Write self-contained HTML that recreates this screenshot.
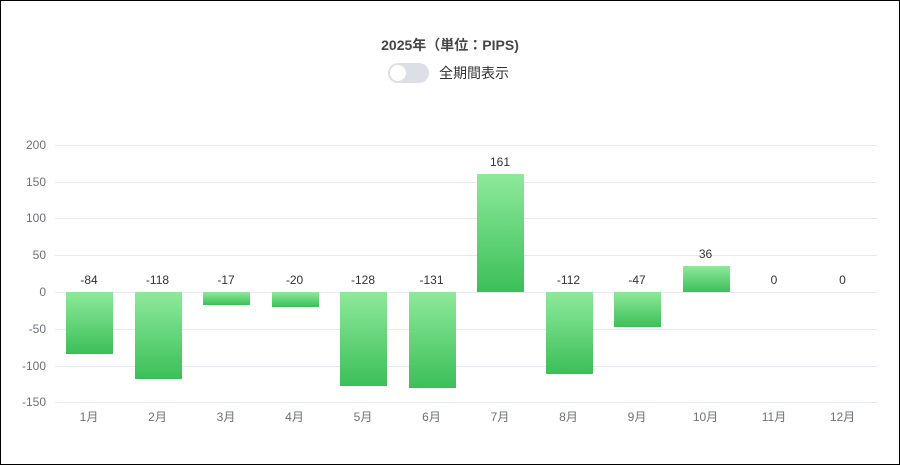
<!DOCTYPE html>
<html><head><meta charset="utf-8"><style>
html,body{margin:0;padding:0}
body{width:900px;height:465px;position:relative;background:#fff;font-family:"Liberation Sans","Noto Sans CJK JP",sans-serif;overflow:hidden}
.frame{position:absolute;left:0;top:0;width:898px;height:463px;border:1px solid #000}
.t{position:absolute;white-space:nowrap}
.g{position:absolute;left:55px;width:822px;height:1px;background:#e6e9f0}
.y{position:absolute;width:44px;left:2px;text-align:right;font-size:12px;color:#6e7079}
.b{position:absolute;width:47px;background:linear-gradient(#8ee99b,#3cbf58)}
.v{position:absolute;width:68px;text-align:center;font-size:12px;color:#333}
.m{position:absolute;width:68px;text-align:center;font-size:12px;color:#6e7079;top:408px}
</style></head><body>
<div class="frame"></div>
<div class="t" style="left:0;width:900px;text-align:center;top:35px;font-size:14px;font-weight:bold;color:#464646">2025年（単位：PIPS)</div>
<div style="position:absolute;left:388px;top:63px;width:41px;height:20px;border-radius:10px;background:#dcdfe6"></div>
<div style="position:absolute;left:390px;top:65px;width:16px;height:16px;border-radius:8px;background:#fff"></div>
<div class="t" style="left:439px;top:63px;font-size:14px;color:#333">全期間表示</div>
<div id="c"></div>
<script>
var c=document.getElementById('c'),h='';
var ys=[200,150,100,50,0,-50,-100,-150];
ys.forEach(function(v){var y=292-v*0.736;h+='<div class="g" style="top:'+Math.round(y)+'px"></div><div class="y" style="top:'+Math.round(y-7)+'px">'+v+'</div>';});
var d=[-84,-118,-17,-20,-128,-131,161,-112,-47,36,0,0];
d.forEach(function(v,i){var x=55+68.5*i;var bx=x+11;
if(v>0){var t=292-v*0.736;h+='<div class="b" style="left:'+bx+'px;top:'+t+'px;height:'+(v*0.736)+'px"></div><div class="v" style="left:'+x+'px;top:'+(t-19)+'px">'+v+'</div>';}
else{ if(v<0)h+='<div class="b" style="left:'+bx+'px;top:292px;height:'+(-v*0.736)+'px"></div>';h+='<div class="v" style="left:'+x+'px;top:273px">'+v+'</div>';}
h+='<div class="m" style="left:'+x+'px">'+(i+1)+'月</div>';});
c.innerHTML=h;
</script>
</body></html>
